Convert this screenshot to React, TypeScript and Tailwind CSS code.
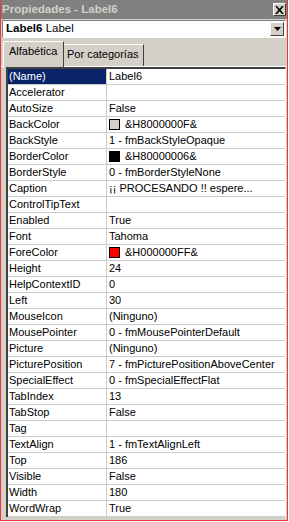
import React from "react";

type Row = { name: string; value?: string; swatch?: string };

const rows: Row[] = [
  { name: "(Name)", value: "Label6" },
  { name: "Accelerator", value: "" },
  { name: "AutoSize", value: "False" },
  { name: "BackColor", value: "&H8000000F&", swatch: "bg-[#d4d0c8]" },
  { name: "BackStyle", value: "1 - fmBackStyleOpaque" },
  { name: "BorderColor", value: "&H80000006&", swatch: "bg-black" },
  { name: "BorderStyle", value: "0 - fmBorderStyleNone" },
  { name: "Caption", value: "¡¡ PROCESANDO !! espere..." },
  { name: "ControlTipText", value: "" },
  { name: "Enabled", value: "True" },
  { name: "Font", value: "Tahoma" },
  { name: "ForeColor", value: "&H000000FF&", swatch: "bg-[#ff0000]" },
  { name: "Height", value: "24" },
  { name: "HelpContextID", value: "0" },
  { name: "Left", value: "30" },
  { name: "MouseIcon", value: "(Ninguno)" },
  { name: "MousePointer", value: "0 - fmMousePointerDefault" },
  { name: "Picture", value: "(Ninguno)" },
  { name: "PicturePosition", value: "7 - fmPicturePositionAboveCenter" },
  { name: "SpecialEffect", value: "0 - fmSpecialEffectFlat" },
  { name: "TabIndex", value: "13" },
  { name: "TabStop", value: "False" },
  { name: "Tag", value: "" },
  { name: "TextAlign", value: "1 - fmTextAlignLeft" },
  { name: "Top", value: "186" },
  { name: "Visible", value: "False" },
  { name: "Width", value: "180" },
  { name: "WordWrap", value: "True" },
];

export default function App() {
  return (
    <div className="w-[289px] h-[522px] bg-white font-['Liberation_Sans',Arial,sans-serif] text-black">
      <div className="w-[288px] h-[521px] border border-[#e23a3a] border-t-0 bg-[#d4d0c8] flex flex-col">
        {/* Title bar */}
        <div className="h-[19px] bg-[#808080] flex items-center justify-between pl-[1px] pr-[1px]">
          <span className="text-[11.5px] font-bold text-[#d4d0c8] leading-none whitespace-nowrap">
            Propiedades - Label6
          </span>
          <div className="w-[13px] h-[13px] bg-[#d4d0c8] border-t border-l border-white border-r border-b border-r-[#404040] border-b-[#404040] flex items-center justify-center">
            <svg width="9" height="8" viewBox="0 0 9 8">
              <path d="M1 0 L8 8 M8 0 L1 8" stroke="black" strokeWidth="1.6" />
            </svg>
          </div>
        </div>

        {/* Object combo */}
        <div className="mt-[1px] mx-[1px] h-[18px] bg-white border-t border-l border-[#808080] border-b border-r border-b-white border-r-white flex items-center">
          <span className="pl-[3px] text-[11.5px] leading-none whitespace-nowrap">
            <span className="font-bold">Label6</span> Label
          </span>
          <div className="ml-auto mr-[1px] w-[14px] h-[14px] bg-[#d4d0c8] border-t border-l border-white border-r border-b border-r-[#404040] border-b-[#404040] flex items-center justify-center">
            <svg width="7" height="4" viewBox="0 0 7 4">
              <path d="M0 0 H7 L3.5 4 Z" fill="black" />
            </svg>
          </div>
        </div>

        {/* Tabs */}
        <div className="mt-[3px] h-[26px] flex items-end pl-[2px] border-b border-white">
          <div className="h-[26px] w-[61px] mb-[-1px] bg-[#d4d0c8] border-t border-l border-white border-r border-r-[#404040] flex items-start pt-[4px] pl-[5px] text-[11px] leading-none whitespace-nowrap z-10">
            Alfabética
          </div>
          <div className="h-[22px] w-[80px] bg-[#d4d0c8] border-t border-white border-r border-r-[#404040] flex items-start pt-[4px] pl-[3px] text-[11px] leading-none whitespace-nowrap">
            Por categorías
          </div>
        </div>

        {/* Property grid */}
        <div className="ml-[5px] mr-[1px] h-[450px] bg-white border-t-2 border-l-2 border-[#404040] border-r border-r-white">
          {rows.map((r, i) => (
            <div key={r.name} className="h-[16px] flex border-b border-[#cccccc] text-[11px] leading-none">
              <div
                className={
                  "w-[99px] shrink-0 border-r border-[#cccccc] flex items-center pl-[1px] whitespace-nowrap " +
                  (i === 0 ? "bg-[#0a246a] text-white" : "")
                }
              >
                {r.name}
              </div>
              <div className="flex-1 flex items-center pl-[2px] whitespace-nowrap overflow-hidden">
                {r.swatch && (
                  <span className={"inline-block w-[11px] h-[11px] border border-black mr-[5px] shrink-0 " + r.swatch} />
                )}
                {r.value}
              </div>
            </div>
          ))}
        </div>
      </div>
    </div>
  );
}
